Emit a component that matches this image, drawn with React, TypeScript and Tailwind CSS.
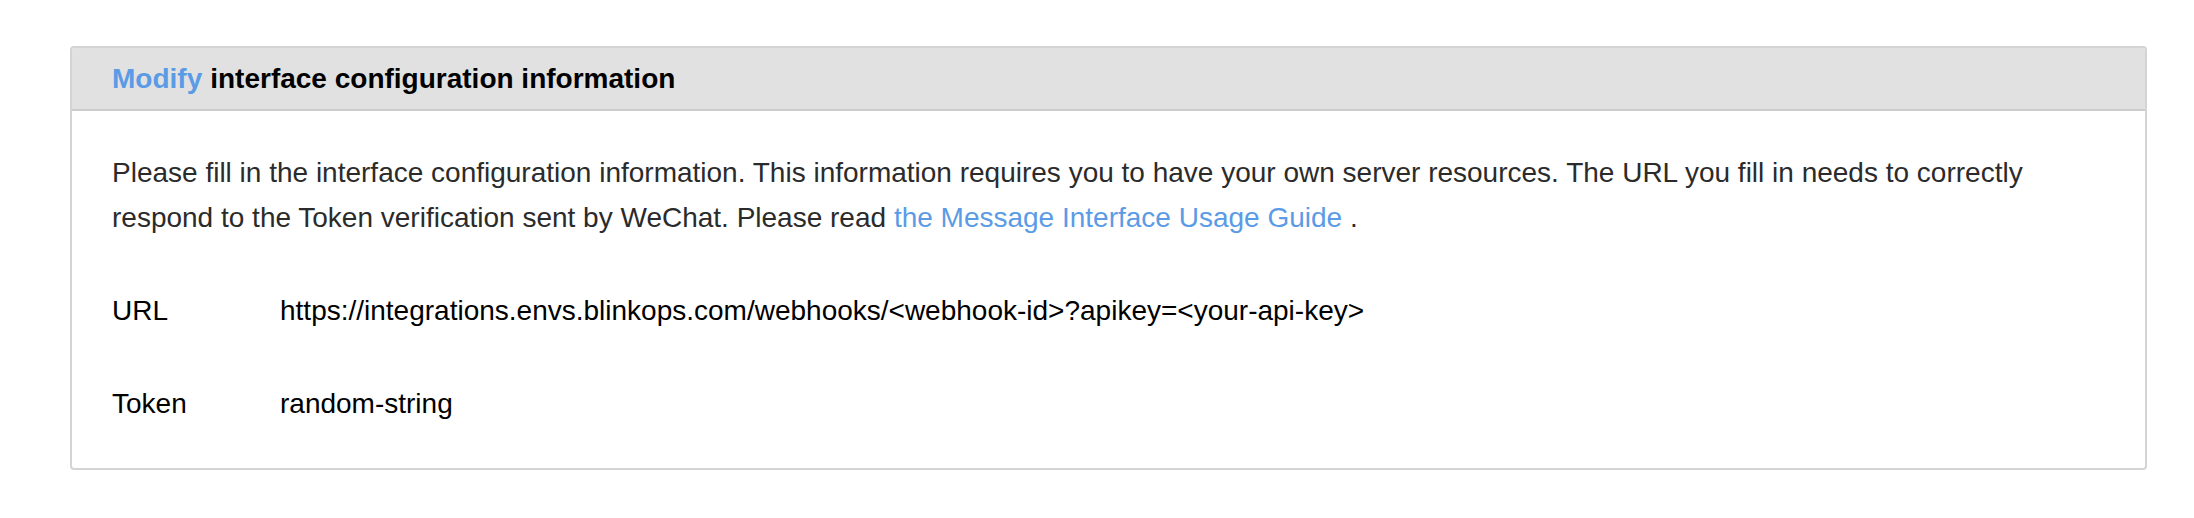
export default function App() {
  return (
    <div className="min-h-screen bg-white pt-[46px] pl-[70px] font-['Liberation_Sans',Arial,sans-serif]">
      <div className="w-[2077px] overflow-hidden rounded-[4px] border-2 border-[#d4d4d4] bg-white">
        {/* Header */}
        <div className="flex h-[63px] items-center border-b-2 border-[#cbcbcb] bg-[#e1e1e1] px-[40px] text-[28px] font-bold text-black">
          <span className="text-[#5b9be6]">Modify</span>
          <span className="ml-[8px]">interface configuration information</span>
        </div>

        {/* Body */}
        <div className="px-[40px] pt-[40px] pb-[41px] text-[28px] leading-[44.8px]">
          <p className="text-[#2b2b2b]">
            Please fill in the interface configuration information. This information requires you to have your own
            server resources. The URL you fill in needs to correctly respond to the Token verification sent by WeChat.
            Please read{" "}
            <a href="#" className="text-[#5b9be6]">
              the Message Interface Usage Guide
            </a>{" "}
            .
          </p>

          <div className="mt-[48px] flex text-black">
            <div className="w-[168px] shrink-0">URL</div>
            <div>https://integrations.envs.blinkops.com/webhooks/&lt;webhook-id&gt;?apikey=&lt;your-api-key&gt;</div>
          </div>

          <div className="mt-[49px] flex text-black">
            <div className="w-[168px] shrink-0">Token</div>
            <div>random-string</div>
          </div>
        </div>
      </div>
    </div>
  )
}
